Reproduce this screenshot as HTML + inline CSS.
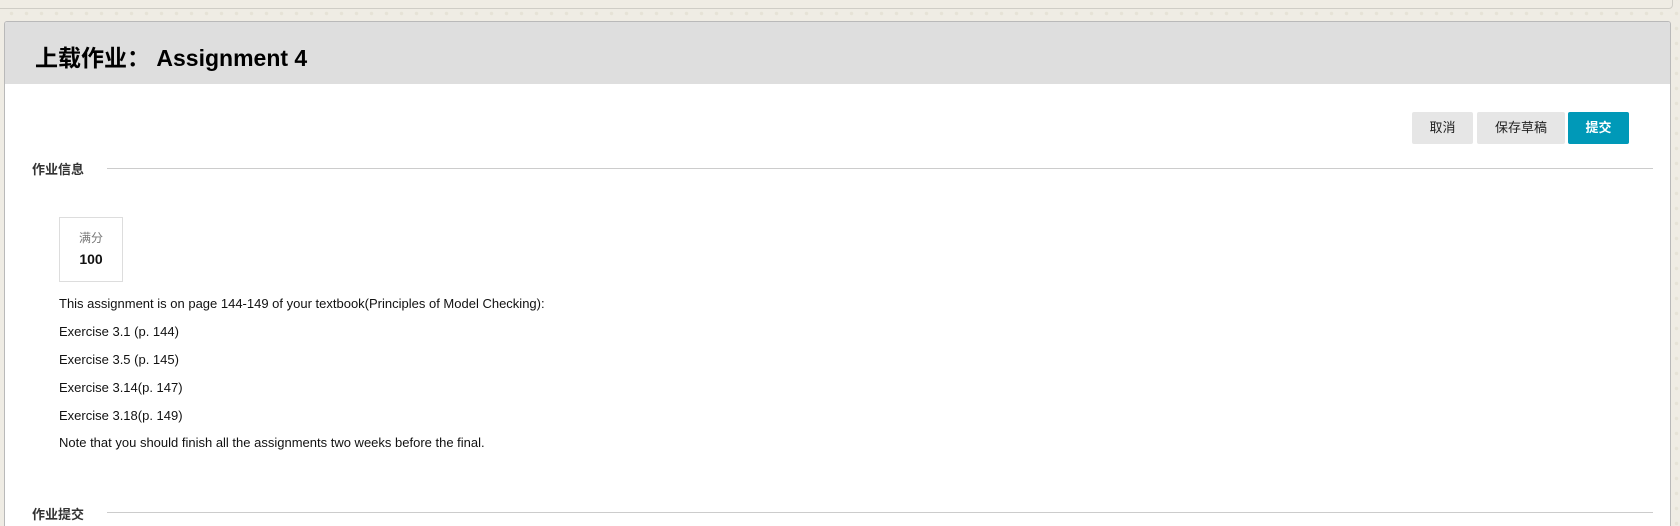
<!DOCTYPE html>
<html><head><meta charset="utf-8"><style>
html,body{margin:0;padding:0;width:1680px;height:526px;overflow:hidden;}
body{background:#efece4;position:relative;font-family:"Liberation Sans","Noto Sans CJK SC",sans-serif;
background-image:radial-gradient(circle,#e6e2d6 1.5px,transparent 2px);background-size:15px 15px;background-position:4px 6px;}
.topbar{position:absolute;left:-5px;top:-10px;width:1676px;height:17px;border:1px solid #cfcdc6;border-radius:4px;background:#efece4;}
.panel{position:absolute;left:4px;top:21px;width:1667px;height:505px;background:#fff;border:1px solid #b9b9b9;border-bottom:none;border-radius:3px 3px 0 0;box-sizing:border-box;overflow:hidden;}
.head{height:62px;background:#dedede;}
.head h1{margin:0;position:absolute;left:30px;top:17px;font-size:23px;font-weight:bold;color:#000;}
.btn{position:absolute;top:90px;height:32px;line-height:32px;text-align:center;font-size:13px;border-radius:2px;background:#e6e6e6;color:#222;}
.sec{position:absolute;left:27px;font-size:13px;font-weight:bold;color:#333;}
.line{position:absolute;left:102px;width:1546px;height:1px;background:#cccccc;}
.box{position:absolute;left:54px;top:195px;width:62px;height:63px;border:1px solid #ddd;text-align:center;}
.p{position:absolute;left:54px;font-size:13px;color:#111;}
</style></head><body>
<div class="topbar"></div>
<div class="panel">
 <div class="head"><h1>上载作业： Assignment 4</h1></div>
 <div class="btn" style="left:1407px;width:61px;">取消</div>
 <div class="btn" style="left:1472px;width:88px;">保存草稿</div>
 <div class="btn" style="left:1563px;width:61px;background:#0099b8;color:#fff;font-weight:bold;">提交</div>
 <div class="sec" style="top:137px;">作业信息</div>
 <div class="line" style="top:146px;"></div>
 <div class="box"><div style="font-size:12px;color:#777;margin-top:11px;">满分</div><div style="font-size:14px;font-weight:bold;color:#111;margin-top:5px;">100</div></div>
 <div class="p" style="top:274px;">This assignment is on page 144-149 of your textbook(Principles of Model Checking):</div>
 <div class="p" style="top:302px;">Exercise 3.1 (p. 144)</div>
 <div class="p" style="top:330px;">Exercise 3.5 (p. 145)</div>
 <div class="p" style="top:358px;">Exercise 3.14(p. 147)</div>
 <div class="p" style="top:386px;">Exercise 3.18(p. 149)</div>
 <div class="p" style="top:413px;">Note that you should finish all the assignments two weeks before the final.</div>
 <div class="sec" style="top:482px;">作业提交</div>
 <div class="line" style="top:490px;"></div>
</div>
</body></html>
